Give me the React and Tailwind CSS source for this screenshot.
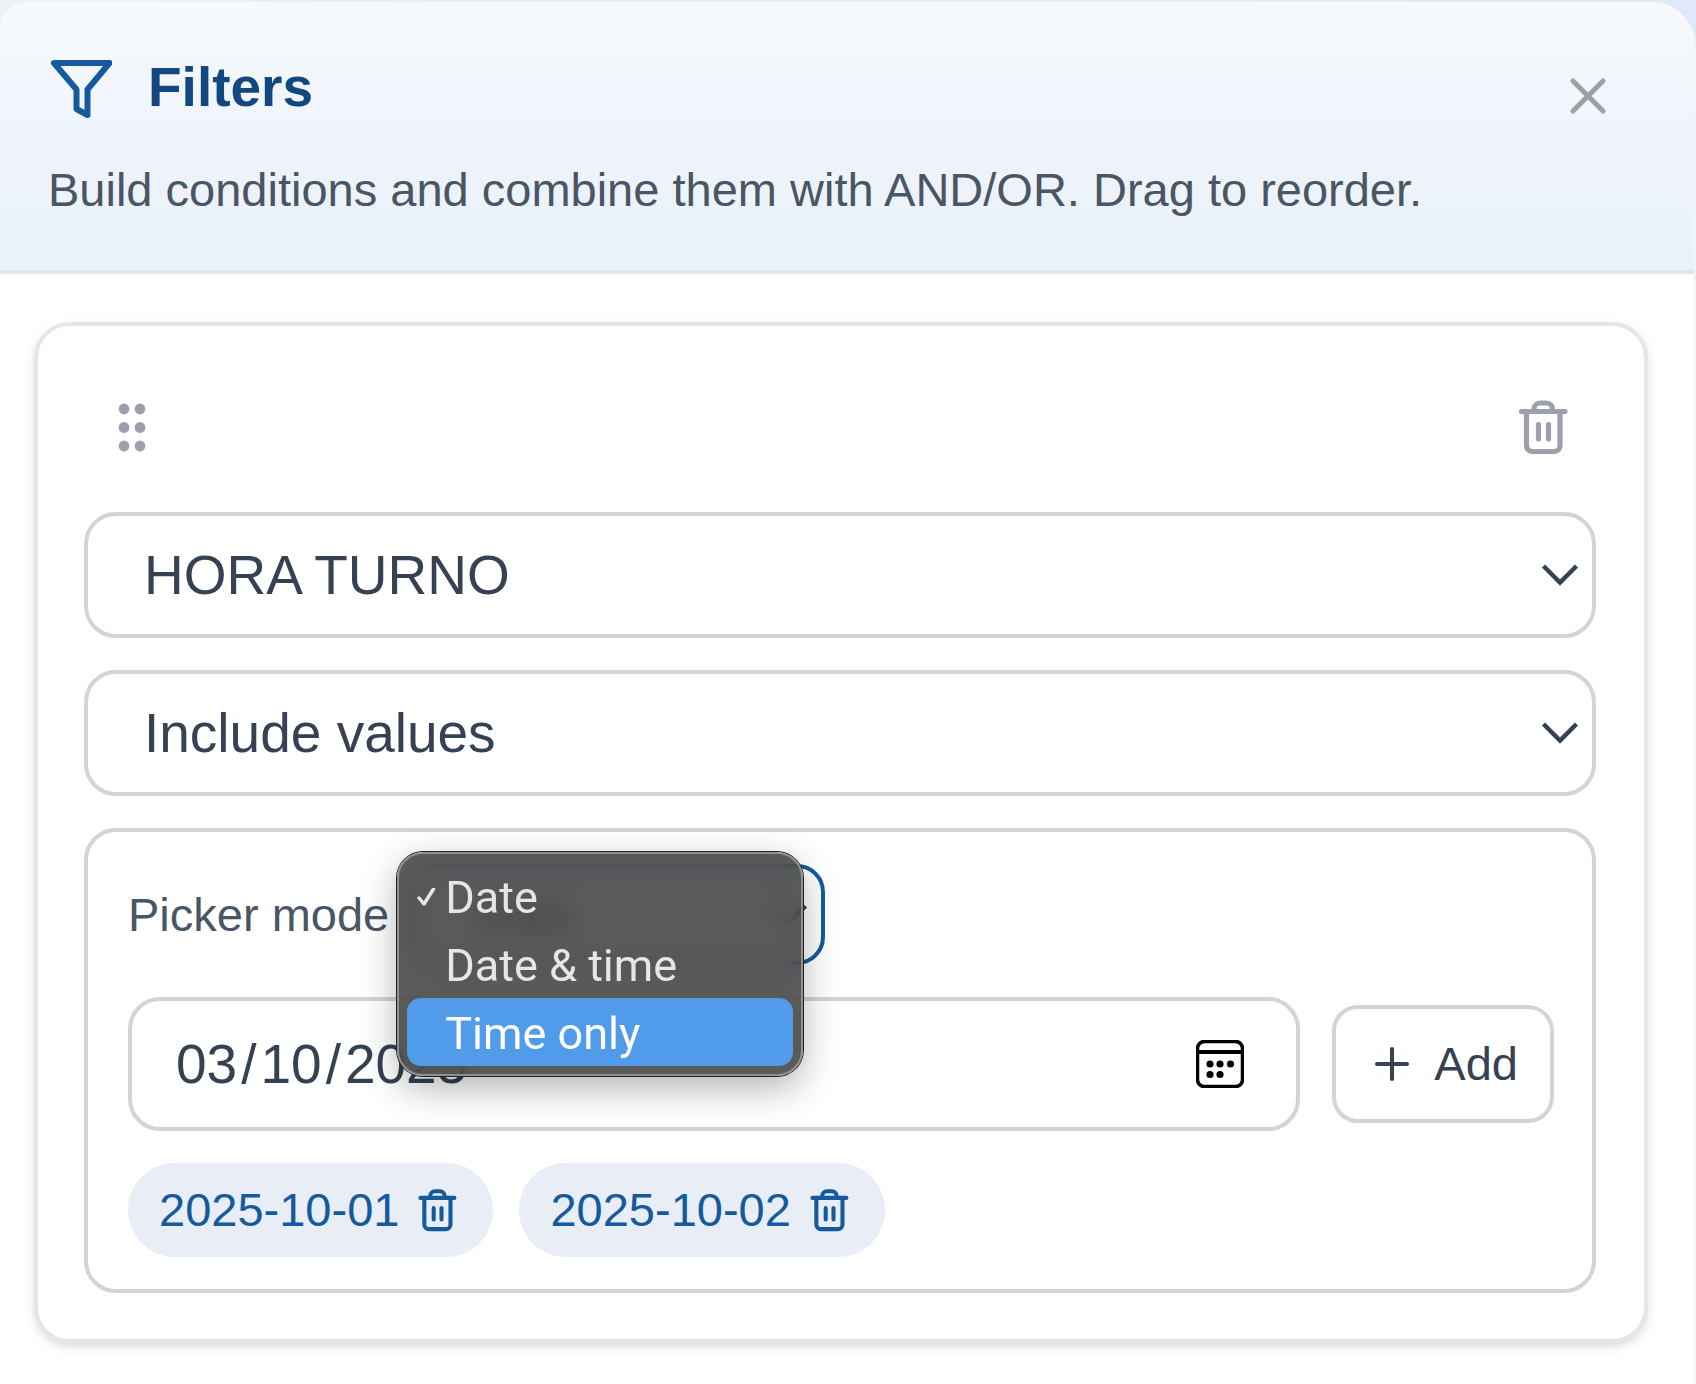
import React, { useState } from "react";

const FIELDS = ["HORA TURNO"];
const OPERATORS = ["Include values", "Exclude values"];
const MODES = ["Date", "Date & time", "Time only"];

const FunnelIcon = () => (
  <svg className="h-16 w-16 shrink-0" viewBox="0 0 64 64" fill="none" stroke="currentColor" strokeWidth="6" strokeLinejoin="round" aria-hidden="true">
    <path d="M6 8h55.500L39.500 34.500v25.500L28.500 54V34.500L6 8z" />
  </svg>
);

const CloseIcon = () => (
  <svg className="h-12 w-12" viewBox="0 0 48 48" fill="none" stroke="currentColor" strokeWidth="5" strokeLinecap="round" aria-hidden="true">
    <path d="M9 9l30 30M39 9L9 39" />
  </svg>
);

const TrashIcon = ({ className }) => (
  <svg className={className} viewBox="0 0 64 64" fill="none" stroke="currentColor" strokeWidth="5.2" strokeLinecap="round" strokeLinejoin="round" aria-hidden="true">
    <path d="M9.500 16.500h43.500" />
    <path d="M22 16.500v-2.500a6 6 0 0 1 6-6h6.500a6 6 0 0 1 6 6v2.500" />
    <path d="M14.500 16.500v34a6 6 0 0 0 6 6h21.500a6 6 0 0 0 6-6v-34" />
    <path d="M26.500 29.500v14.500M36.500 29.500v14.500" />
  </svg>
);

const GripIcon = () => (
  <svg className="h-14 w-10" viewBox="0 0 40 56" fill="currentColor" aria-hidden="true">
    {[10, 28.5, 47].map((y) => (
      <g key={y}>
        <circle cx="12" cy={y} r="5.400" />
        <circle cx="28" cy={y} r="5.400" />
      </g>
    ))}
  </svg>
);

const ChevronIcon = () => (
  <svg className="pointer-events-none absolute right-4 top-1/2 h-6 w-10 -translate-y-1/2" viewBox="0 0 40 24" fill="none" stroke="currentColor" strokeWidth="4.5" aria-hidden="true">
    <path d="M3.500 3l16.500 16.500L36.500 3" />
  </svg>
);

const CalendarIcon = () => (
  <svg className="h-12 w-12" viewBox="0 0 48 48" aria-hidden="true">
    <rect x="1.500" y="1.500" width="45" height="45" rx="7" fill="none" stroke="currentColor" strokeWidth="3.500" />
    <path d="M2 12h44" stroke="currentColor" strokeWidth="4" />
    <g fill="currentColor">
      <circle cx="14" cy="24" r="3.600" />
      <circle cx="24" cy="24" r="3.600" />
      <circle cx="34.500" cy="24" r="3.600" />
      <circle cx="14" cy="34.500" r="3.600" />
      <circle cx="24" cy="34.500" r="3.600" />
    </g>
  </svg>
);

const PlusIcon = () => (
  <svg className="h-12 w-12" viewBox="0 0 48 48" fill="none" stroke="currentColor" strokeWidth="4" strokeLinecap="round" aria-hidden="true">
    <path d="M24 9v30M9 24h30" />
  </svg>
);

const CheckIcon = () => (
  <svg className="h-5 w-5" viewBox="0 0 20 20" fill="none" stroke="currentColor" strokeWidth="3.500" strokeLinecap="round" strokeLinejoin="round" aria-hidden="true">
    <path d="M2 10l5 6 9.500-15" />
  </svg>
);

const FieldSelect = ({ label, options }) => (
  <div className="relative text-gray-700">
    <select
      aria-label={label}
      className="block h-[126px] w-full appearance-none rounded-[32px] border-4 border-[#d2d4d7] bg-white pl-14 pr-20 text-[55px] leading-[80px]"
    >
      {options.map((o) => (
        <option key={o}>{o}</option>
      ))}
    </select>
    <ChevronIcon />
  </div>
);

const PickerMode = () => {
  const [mode, setMode] = useState("Date");
  const [active, setActive] = useState("Time only");
  const [open, setOpen] = useState(true);

  return (
    <div className="flex items-center gap-6">
      <label htmlFor="picker-mode" className="text-[47px] leading-[64px] text-gray-600">
        Picker mode
      </label>
      <div className="relative text-gray-700">
        <select
          id="picker-mode"
          value={mode}
          onChange={(e) => setMode(e.target.value)}
          className="block h-[101px] w-[412px] appearance-none rounded-[28px] border-4 border-[#155a9c] bg-white pl-14 pr-16 text-[47px] leading-[64px] outline-none"
        >
          {MODES.map((m) => (
            <option key={m}>{m}</option>
          ))}
        </select>
        <ChevronIcon />
        {open && (
          <ul
            role="listbox"
            aria-label="Picker mode"
            className="absolute -left-4 -top-3 z-10 w-[406px] rounded-[26px] border-2 border-[#8f8f8f] bg-[#3d3d3d]/85 p-2 font-[Roboto,sans-serif] text-[45px] leading-[64px] text-[#e6e6e6] shadow-[0_0_0_1px_#222,0_12px_36px_rgb(0_0_0/0.3)] backdrop-blur-md"
          >
            {MODES.map((m) => (
              <li
                key={m}
                role="option"
                aria-selected={m === mode}
                onMouseEnter={() => setActive(m)}
                onClick={() => {
                  setMode(m);
                  setOpen(false);
                }}
                className={
                  m === active
                    ? "flex items-center rounded-[14px] bg-[#509bea] pl-2 pt-1 text-white"
                    : "flex items-center rounded-[14px] pl-2 pt-1"
                }
              >
                <span className="flex w-[30px] shrink-0 items-center pl-[2px]">{m === mode && <CheckIcon />}</span>
                {m}
              </li>
            ))}
          </ul>
        )}
      </div>
    </div>
  );
};

const DateChip = ({ value, onRemove }) => (
  <li className="flex h-[94px] items-center gap-[14px] rounded-full bg-[#e8edf6] pl-[31px] pr-[30px] text-[47px] leading-[64px] text-[#155a9c]">
    {value}
    <button type="button" aria-label={`Remove ${value}`} onClick={onRemove}>
      <TrashIcon className="h-[50px] w-[50px]" />
    </button>
  </li>
);

const DateValues = () => {
  const [draft, setDraft] = useState("2025-03-10");
  const [dates, setDates] = useState(["2025-10-01", "2025-10-02"]);

  const handleAdd = () => {
    if (!draft || dates.includes(draft)) return;
    setDates([...dates, draft]);
  };

  return (
    <>
      <div className="flex items-center gap-8">
        <div className="relative min-w-0 flex-1">
          <input
            type="date"
            aria-label="Date value"
            value={draft}
            onChange={(e) => setDraft(e.target.value)}
            className="block h-[134px] w-full rounded-[32px] border-4 border-[#d2d4d7] bg-white pl-10 pr-28 text-[55px] leading-[80px] text-gray-700 [&::-webkit-calendar-picker-indicator]:hidden [&::-webkit-datetime-edit-day-field]:px-1 [&::-webkit-datetime-edit-month-field]:px-1 [&::-webkit-datetime-edit-year-field]:px-1"
          />
          <button type="button" aria-label="Open calendar" className="absolute right-14 top-1/2 -translate-y-1/2 text-black">
            <CalendarIcon />
          </button>
        </div>
        <button
          type="button"
          onClick={handleAdd}
          className="flex h-[118px] items-center gap-[18px] rounded-[26px] border-4 border-[#d2d4d7] bg-white px-8 text-[47px] leading-[64px] text-gray-700"
        >
          <PlusIcon />
          Add
        </button>
      </div>
      <ul className="flex flex-wrap gap-[26px]">
        {dates.map((d) => (
          <DateChip key={d} value={d} onRemove={() => setDates(dates.filter((x) => x !== d))} />
        ))}
      </ul>
    </>
  );
};

const App = () => {
  return (
    <div className="min-h-screen bg-linear-to-r from-[#eef2f8] to-[#dfe9fb] pt-[2px] font-['Liberation_Sans',Arial,sans-serif]">
      <main className="min-h-[calc(100vh-2px)] rounded-tl-[28px] rounded-tr-[44px] border-r-2 border-[#f3f4f5] bg-white">
        <header className="flex items-start justify-between rounded-tl-[28px] rounded-tr-[42px] border-b-4 border-[#e3e5e8] bg-linear-to-b from-[#f6fafc] via-[#f0f4fc] to-[#e9f1f9] pb-12 pl-12 pr-[82px] pt-12">
          <div>
            <div className="flex items-center gap-9 text-[#155a9c]">
              <FunnelIcon />
              <h1 className="text-[55px] font-bold leading-[74px] text-[#10487f]">Filters</h1>
            </div>
            <p className="mt-[34px] text-[47px] leading-[64px] text-gray-600">
              Build conditions and combine them with AND/OR. Drag to reorder.
            </p>
          </div>
          <button type="button" aria-label="Close" className="mt-[22px] text-[#9ca0a9]">
            <CloseIcon />
          </button>
        </header>

        <div className="pb-10 pl-[34px] pr-[46px] pt-12">
          <section className="flex flex-col gap-8 rounded-[36px] border-4 border-[#e5e6e8] bg-white pb-[46px] pl-[46px] pr-12 pt-12 shadow-[0_4px_12px_rgb(0_0_0/0.1),0_4px_8px_-4px_rgb(0_0_0/0.1)]">
            <div className="flex h-[106px] items-center justify-between pl-7 pr-5 text-[#9ca0ab]">
              <button type="button" aria-label="Drag to reorder">
                <GripIcon />
              </button>
              <button type="button" aria-label="Delete condition">
                <TrashIcon className="h-16 w-16" />
              </button>
            </div>
            <FieldSelect label="Field" options={FIELDS} />
            <FieldSelect label="Operator" options={OPERATORS} />
            <div className="flex flex-col gap-8 rounded-[32px] border-4 border-[#d2d4d7] py-8 pl-10 pr-[38px]">
              <PickerMode />
              <DateValues />
            </div>
          </section>
        </div>
      </main>
    </div>
  );
};

export default App;
